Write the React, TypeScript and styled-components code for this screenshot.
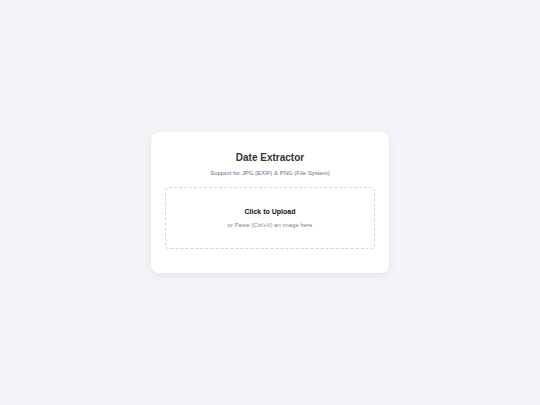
import styled, { createGlobalStyle } from 'styled-components'

const GlobalStyle = createGlobalStyle`
	html, body {
		margin: 0;
		padding: 0;
		height: 100%;
		background: #f4f4f8;
		font-family: 'Liberation Sans', Arial, sans-serif;
	}
	#root {
		height: 100%;
	}
`

export default function App () {
	return (
		<Page>
			<GlobalStyle />
			<Card>
				<Title>Date Extractor</Title>
				<Subtitle>Support for JPG (EXIF) &amp; PNG (File System)</Subtitle>
				<DropZone>
					<DropTitle>Click to Upload</DropTitle>
					<DropHint>or Paste (Ctrl+V) an image here</DropHint>
				</DropZone>
			</Card>
		</Page>
	)
}

const Page = styled.main`
	display: flex;
	align-items: center;
	justify-content: center;
	height: 100%;
`

const Card = styled.section`
	width: 238px;
	box-sizing: border-box;
	padding: 19px 14px 24px;
	background: #fff;
	border-radius: 8px;
	box-shadow: 0 2px 8px rgba(30, 30, 60, 0.08);
	text-align: center;
`

const Title = styled.h1`
	margin: 0;
	font-size: 10px;
	line-height: 14px;
	font-weight: 700;
	color: #333;
`

const Subtitle = styled.p`
	margin: 4px 0 9px;
	font-size: 6px;
	line-height: 9px;
	color: #66728a;
`

const DropZone = styled.div`
	display: flex;
	flex-direction: column;
	align-items: center;
	justify-content: center;
	gap: 7px;
	height: 62px;
	box-sizing: border-box;
	border: 1px dashed #d3d6dc;
	border-radius: 4px;
	cursor: pointer;
`

const DropTitle = styled.div`
	font-size: 7px;
	font-weight: 700;
	color: #111;
`

const DropHint = styled.div`
	font-size: 6px;
	color: #7b8495;
`
